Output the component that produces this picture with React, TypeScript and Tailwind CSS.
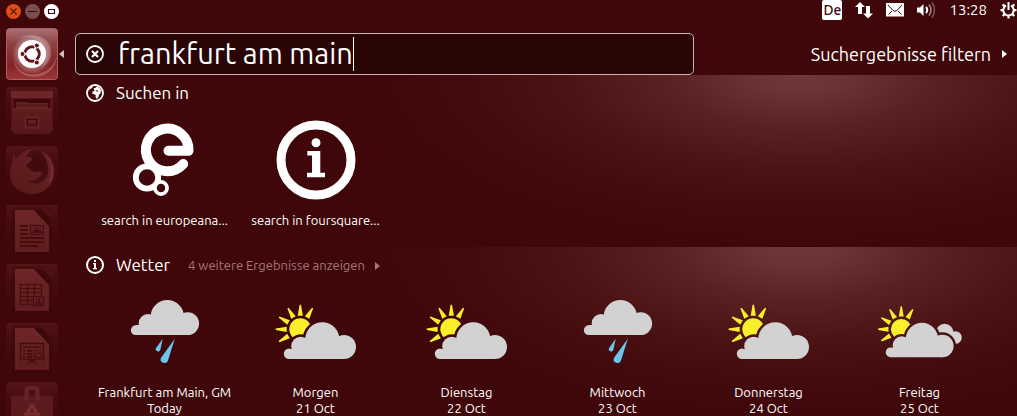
import { useState } from "react";
import type { ReactNode } from "react";

type Weather = "rain" | "sun" | "sunClouds";

const forecast: { day: string; date: string; weather: Weather }[] = [
  { day: "Frankfurt am Main, GM", date: "Today", weather: "rain" },
  { day: "Morgen", date: "21 Oct", weather: "sun" },
  { day: "Dienstag", date: "22 Oct", weather: "sun" },
  { day: "Mittwoch", date: "23 Oct", weather: "rain" },
  { day: "Donnerstag", date: "24 Oct", weather: "sun" },
  { day: "Freitag", date: "25 Oct", weather: "sunClouds" },
];

/* ---------- SMALL ICONS ---------- */

function InfoIcon({ className }: { className: string }) {
  return (
    <svg viewBox="8 8 80 80" className={className} aria-hidden="true">
      <circle cx="48" cy="48" r="35" fill="none" stroke="#fff" strokeWidth="9" />
      <circle cx="48" cy="30.7" r="4.5" fill="#fff" />
      <path d="M39.3 39h13v21.7H57v4.6H39v-4.6h5V43.4h-4.7z" fill="#fff" />
    </svg>
  );
}

function SmallInfoIcon() {
  return (
    <svg viewBox="0 0 18 18" className="size-[18px]" aria-hidden="true">
      <circle cx="9" cy="9" r="8" fill="none" stroke="#fff" strokeWidth="2" />
      <path d="M8 4h2v2H8zM7 7h3v5h1v1.2H7V12h1V8.2H7z" fill="#fff" />
    </svg>
  );
}

function GlobeIcon() {
  return (
    <svg viewBox="0 0 18 18" className="size-[18px]" aria-hidden="true">
      <circle cx="9" cy="9" r="8" fill="none" stroke="#fff" strokeWidth="1.8" />
      <path d="M7.5 4.5l2-.8L11 2.500l2.600 1.500L15.500 7l-1.300 1 .8.8-2 2-.6 2.400-1.700 1.800-1.100-1.700.1-2.400-1.900-.6L6 9.200l.7-1.800 1.900-.9z" fill="#fff" />
      <path d="M9.300 6.500l1.700-.3 1.500.9-1.200.6z" fill="#3f0709" />
      <path d="M2.300 6.500L4.500 3 7 2.200 6.300 3.800 4.300 5z" fill="#fff" />
    </svg>
  );
}

function ClearIcon() {
  return (
    <svg viewBox="0 0 18 18" className="size-[18px]" aria-hidden="true">
      <circle cx="9" cy="9" r="8" fill="none" stroke="#fff" strokeWidth="1.8" />
      <path d="M6 6l6 6M12 6l-6 6" stroke="#fff" strokeWidth="2.2" />
    </svg>
  );
}

function Triangle({ className }: { className: string }) {
  return (
    <svg viewBox="0 0 5 8" className={className} aria-hidden="true">
      <path d="M0 0l5 4-5 4z" fill="currentColor" />
    </svg>
  );
}

/* ---------- TOP BAR ---------- */

function TopBar() {
  return (
    <header className="flex h-[22px] items-start justify-between">
      <div className="flex gap-1 pt-1 pl-[6px]">
        <button type="button" aria-label="Schließen" className="size-[15px]">
          <svg viewBox="0 0 15 15" className="size-[15px]">
            <circle cx="7.5" cy="7.5" r="7.5" fill="#e04c16" />
            <path d="M4.5 4.5l6 6M10.5 4.5l-6 6" stroke="#5a1a0a" strokeWidth="1.2" />
          </svg>
        </button>
        <button type="button" aria-label="Minimieren" className="size-[15px]">
          <svg viewBox="0 0 15 15" className="size-[15px]">
            <circle cx="7.5" cy="7.5" r="7.5" fill="#7a4e50" />
            <path d="M3 7.5h9" stroke="#3f0709" />
          </svg>
        </button>
        <button type="button" aria-label="Maximieren" className="size-[15px]">
          <svg viewBox="0 0 15 15" className="size-[15px]">
            <circle cx="7.5" cy="7.5" r="7.5" fill="#fff" />
            <path d="M4.500 5.500h6v4h-6z" fill="none" stroke="#3f0709" strokeWidth="1.2" />
          </svg>
        </button>
      </div>

      <div className="flex h-5 items-center gap-[13px] text-[15px]">
        <button type="button" className="h-5 w-5 rounded-xs bg-white text-center text-sm leading-5 font-medium text-[#3f0709]">De</button>
        <button type="button" aria-label="Netzwerk">
          <svg viewBox="0 0 18 18" className="size-[18px]">
            <path d="M5 1l5 5H7v7H3V6H0z" fill="#fff" />
            <path d="M13 17.500l5-5h-3V5h-4v7.500H8z" fill="#fff" />
          </svg>
        </button>
        <button type="button" aria-label="Nachrichten">
          <svg viewBox="0 0 18 14" className="h-[14px] w-[18px]">
            <rect width="18" height="13.5" rx=".5" fill="#fff" />
            <path d="M2 2l5 5.500q2 1.500 4 0L16 2M2.500 11.500L6 8M15.500 11.500L12 8" fill="none" stroke="#3f0709" />
          </svg>
        </button>
        <button type="button" aria-label="Lautstärke">
          <svg viewBox="0 0 19 18" className="h-[18px] w-[19px]">
            <path d="M0 6.500h3L6.500 3v12L3 11.500H0z" fill="#fff" />
            <path d="M9 6q2.500 3 0 6" fill="none" stroke="#fff" strokeWidth="2" />
            <path d="M12 3.500q4 5.500 0 11" fill="none" stroke="#a58586" strokeWidth="1.6" />
            <path d="M15 1.500q5 7.500 0 15" fill="none" stroke="#7c5152" strokeWidth="1.6" />
          </svg>
        </button>
        <time className="text-white">13:28</time>
        <button type="button" aria-label="System">
          <svg viewBox="0 0 17 18" className="h-[18px] w-[17px]">
            <path d="M6 4.700a5.200 5.200 0 1 0 5 0" fill="none" stroke="#fff" strokeWidth="2" />
            <path d="M8.500 1v8" stroke="#fff" strokeWidth="2" />
            <path d="M.5 9.200h3M13.500 9.200h3M8.500 14.500v3M2.700 3.400l2 2M14.300 3.400l-2 2M2.700 15l2-2M14.300 15l-2-2" stroke="#fff" strokeWidth="2.2" />
          </svg>
        </button>
      </div>
    </header>
  );
}

/* ---------- LAUNCHER ---------- */

function UbuntuArt() {
  return (
    <svg viewBox="0 0 52 52" className="size-[52px]">
      <defs>
        <linearGradient id="dashTile" x1="0" y1="0" x2="0" y2="1">
          <stop offset="0" stopColor="#a87373" />
          <stop offset=".3" stopColor="#8c4143" />
          <stop offset=".7" stopColor="#822427" />
          <stop offset="1" stopColor="#9c3538" />
        </linearGradient>
        <radialGradient id="dashGlow">
          <stop offset=".6" stopColor="#fff" stopOpacity=".4" />
          <stop offset="1" stopColor="#fff" stopOpacity="0" />
        </radialGradient>
      </defs>
      <rect x=".5" y=".5" width="51" height="51" rx="3" fill="url(#dashTile)" stroke="#b25a5c" />
      <path d="M1 17C17 3 38 5 44 17c3 10-1 19-9 23 8-10 6-23-5-29C21 7 10 9 1 17z" fill="#fff" opacity=".2" />
      <path d="M8 29C9 45 25 51 40 43c6-4 9-9 11-15-1 11-8 18-17 20C19 51 7 43 8 29z" fill="#fff" opacity=".22" />
      <circle cx="26" cy="26" r="20" fill="url(#dashGlow)" />
      <circle cx="26" cy="26" r="14" fill="#fff" />
      <circle cx="26" cy="26" r="7.2" fill="none" stroke="#641416" strokeWidth="3" />
      <path d="M26 26L16 26M26 26l5-9M26 26l5 9" stroke="#fff" strokeWidth="1.6" />
      <circle cx="26" cy="26" r="5.600" fill="#fff" />
      <g fill="#641416" stroke="#fff" strokeWidth="1">
        <circle cx="16.500" cy="26" r="2.500" />
        <circle cx="30.800" cy="17.500" r="2.500" />
        <circle cx="30.800" cy="34.500" r="2.500" />
      </g>
    </svg>
  );
}

function FilesArt() {
  return (
    <svg viewBox="0 0 52 52" className="size-[52px]">
      <defs>
        <linearGradient id="drawer" x1="0" y1="0" x2="0" y2="1">
          <stop offset="0" stopColor="#611d20" />
          <stop offset="1" stopColor="#54161a" />
        </linearGradient>
      </defs>
      <path d="M5 5q0-1 1-1h40q1 0 1 1v39H5z" fill="#571719" />
      <rect x="5" y="4" width="42" height="7" rx="1" fill="#6d2528" />
      <path d="M8 12h36v9H8z" fill="#3c080a" />
      <path d="M10 15h12l1 1h19v6H10z" fill="#632023" />
      <path d="M10 18h32" stroke="#4a1012" />
      <path d="M7 21h38v26H7z" fill="url(#drawer)" />
      <path d="M7 21.5h38" stroke="#6c2528" />
      <rect x="19" y="30" width="14" height="11" rx="2" fill="#64202300" stroke="#651f22" strokeWidth="2" />
      <rect x="21.5" y="32.5" width="9" height="5" fill="#642023" stroke="#3c080a" />
    </svg>
  );
}

function FirefoxArt() {
  return (
    <svg viewBox="0 0 52 52" className="size-[52px]">
      <defs>
        <radialGradient id="globe" cx=".55" cy=".35">
          <stop offset="0" stopColor="#3c080a" />
          <stop offset="1" stopColor="#4c1215" />
        </radialGradient>
        <linearGradient id="fox" x1="0" y1="1" x2="1" y2="0">
          <stop offset="0" stopColor="#561719" />
          <stop offset="1" stopColor="#6c2427" />
        </linearGradient>
      </defs>
      <circle cx="27" cy="25" r="21.500" fill="url(#globe)" />
      <path d="M7 8l3 5c5-7 13-10 19-10-6 2-8 5-9 8 3 0 6 0 6 2s-5 4-6 7c4 3 6 6 10 6 3-1 6-1 6 2-3 5-9 8-15 6 6 6 16 4 20-3 3-7 1-17-6-26 10 4 14 13 13 23-1 12-10 20-22 20C13 48 4 39 4 28c0-7 3-11 3-20z" fill="url(#fox)" />
      <path d="M40 9c7 9 7 20 2 29l3-3c4-9 2-19-5-26z" fill="#7c2e31" />
    </svg>
  );
}

function Sheet({ id, children }: { id: string; children: ReactNode }) {
  return (
    <svg viewBox="0 0 52 52" className="size-[52px]">
      <defs>
        <linearGradient id={id} x1="0" y1="0" x2="0" y2="1">
          <stop offset="0" stopColor="#6f2629" />
          <stop offset="1" stopColor="#5c1b1e" />
        </linearGradient>
      </defs>
      <path d="M6 2h40v48H6z" fill="#350608" opacity=".3" />
      <path d="M9 5h19l15 16v26H9z" fill={`url(#${id})`} />
      <path d="M11 21v24h30V22" fill="none" stroke="#702729" opacity=".6" />
      <path d="M28 5l15 16V9q0-4-4-4z" fill="#3c080a" />
      <path d="M34 3h9q3 0 3 3v9z" fill="#4c1114" />
      {children}
    </svg>
  );
}

function WriterArt() {
  return (
    <Sheet id="writer">
      <path d="M14 21h8M14 25h8M14 29h8M14 33h24M14 37h24M14 41h18" stroke="#460c0e" strokeWidth="2" />
      <rect x="24.5" y="20.5" width="13" height="9" fill="#5e1d20" stroke="#460c0e" />
      <path d="M26 28l4-5 3 3 1-1 3 3z" fill="#460c0e" />
    </Sheet>
  );
}

function CalcArt() {
  return (
    <Sheet id="calc">
      <path d="M14.500 20.500h21v20h-21zM14 24.500h22M14 28.500h22M14 32.500h22M14 36.500h22M21.500 20v21M28.500 20v21" fill="none" stroke="#460c0e" strokeWidth="1.2" />
      <path d="M27.500 32.500h10v9h-10z" fill="#5e1d20" stroke="#460c0e" />
      <path d="M30.500 41v-4M33 41v-7M35.500 41v-3" stroke="#460c0e" strokeWidth="1.5" />
    </Sheet>
  );
}

function ImpressArt() {
  return (
    <Sheet id="impress">
      <path d="M14.500 20.500h23v16h-23zM17 24h18M26 37v3M21 41l5-4 5 4" fill="none" stroke="#460c0e" strokeWidth="1.5" />
      <path d="M17 28h2M17 31h2M17 34h2M21 28h5M21 31h5M21 34h5" stroke="#460c0e" strokeWidth="2" />
      <path d="M28 27.500h7v7h-7zM29 33l2-3 1 1 2-2" fill="none" stroke="#460c0e" />
    </Sheet>
  );
}

function SoftwareArt() {
  return (
    <svg viewBox="0 0 52 52" className="size-[52px]">
      <path d="M5 11h42v41H5z" fill="#5b1a1d" />
      <path d="M5 11h42v3H5z" fill="#4b1013" />
      <path d="M20.500 18V9q0-3 3-3h5q3 0 3 3v9" fill="none" stroke="#662225" strokeWidth="4" />
      <path d="M17 37l7-15h4l7 15h-4l-5-11-5 11z" fill="#7a2b2e" />
      <path d="M18 32h16" stroke="#7a2b2e" strokeWidth="3" />
    </svg>
  );
}

const apps = [
  { name: "Dateien", art: <FilesArt /> },
  { name: "Firefox", art: <FirefoxArt /> },
  { name: "Writer", art: <WriterArt /> },
  { name: "Calc", art: <CalcArt /> },
  { name: "Impress", art: <ImpressArt /> },
  { name: "Software-Center", art: <SoftwareArt /> },
];

function Launcher() {
  return (
    <nav className="flex w-16 shrink-0 flex-col gap-[7px] pt-[6px] pl-[6px]">
      <div className="flex items-center gap-px">
        <button type="button" aria-label="Dash" className="size-[52px] shrink-0">
          <UbuntuArt />
        </button>
        <Triangle className="h-2 w-[5px] rotate-180 text-[#d0c0c0]" />
      </div>
      {apps.map((app) => (
        <button key={app.name} type="button" aria-label={app.name} className="size-[52px] shrink-0 overflow-hidden rounded bg-linear-to-b from-[#541416] via-[#450b0d] via-30% to-[#3f0709]">
          {app.art}
        </button>
      ))}
    </nav>
  );
}

/* ---------- WEATHER DRAWINGS ---------- */

function Cloud() {
  return (
    <>
      <circle cx="54.3" cy="55.4" r="17.1" />
      <circle cx="76" cy="63" r="12" />
      <circle cx="32.8" cy="62.3" r="9.6" />
      <circle cx="21" cy="69.8" r="5.2" />
      <path d="M21 65h55v10H21z" />
    </>
  );
}

function RainArt() {
  return (
    <svg viewBox="0 0 96 96" className="size-24">
      <g fill="#d2d2d2">
        <circle cx="50.3" cy="32.7" r="16.7" />
        <circle cx="70.7" cy="39.6" r="11.4" />
        <circle cx="31" cy="39.3" r="9.3" />
        <circle cx="18.8" cy="46.2" r="4.9" />
        <path d="M18.800 41h52v10.100h-52z" />
      </g>
      <path d="M45.700 54.800l-2.300 11a2.300 2.300 0 1 1-4.500-1.600zM57.800 54.800L51 76.500a3.700 3.700 0 1 1-7.100-2.600z" fill="#6cc5ec" />
    </svg>
  );
}

function SunArt({ id, extra }: { id: string; extra?: boolean }) {
  return (
    <svg viewBox="0 0 96 96" className="size-24">
      <mask id={id} maskUnits="userSpaceOnUse" x="0" y="0" width="110" height="110">
        <path d="M0 0h110v110H0z" fill="#fff" />
        <g fill="#000" stroke="#000" strokeWidth="5">
          <Cloud />
        </g>
      </mask>
      <g transform={extra ? "translate(-1.1 2.7) scale(.94)" : undefined}>
        <g mask={`url(#${id})`}>
          {extra && (
            <g fill="#d2d2d2">
              <circle cx="78.5" cy="49" r="9.5" />
              <circle cx="90" cy="54" r="6.7" />
            </g>
          )}
          <g fill="#fbee2b">
            <circle cx="32.3" cy="45.3" r="11" />
            {[-120, -90, -60, -30, 0, 30].map((a) => (
              <path key={a} d="M29.700 31.700L31.600 20.700h1.400l1.900 11z" transform={`rotate(${a} 32.3 45.3)`} />
            ))}
          </g>
        </g>
        <g fill="#d2d2d2">
          <Cloud />
        </g>
      </g>
    </svg>
  );
}

function EuropeanaArt() {
  return (
    <svg viewBox="0 0 96 96" className="size-24">
      <g fill="none" stroke="#fff">
        <path d="M51.500 38.800h20A21.300 21.300 0 1 0 66.200 52" strokeWidth="10" strokeLinecap="round" strokeLinejoin="round" />
        <circle cx="30" cy="65.5" r="11.2" strokeWidth="5.8" fill="#3f0709" />
        <circle cx="44" cy="76" r="6.1" strokeWidth="3.7" fill="#3f0709" />
      </g>
    </svg>
  );
}

/* ---------- RESULTS ---------- */

function Section({ icon, title, more, children }: { icon: ReactNode; title: string; more?: string; children: ReactNode }) {
  return (
    <section className="bg-[radial-gradient(ellipse_430px_172px_at_77%_0%,#6f3738_0%,#6b3334_10%,#5a2123_31%,#4c1314_55%,#430b0d_78%,#3f0709_100%)] pb-[19px]">
      <div className="mb-px flex h-9 items-center pl-[11px]">
        {icon}
        <h2 className="ml-3 text-[17px] leading-6">{title}</h2>
        {more && (
          <a href="#wetter" className="ml-[18px] flex items-center gap-[10px] pt-0.5 text-[13px] text-[#a37879]">
            {more}
            <Triangle className="h-2 w-[5px]" />
          </a>
        )}
      </div>
      <div className="grid grid-cols-6 pr-[22px] pl-[14px]">{children}</div>
    </section>
  );
}

function Tile({ art, lines }: { art: ReactNode; lines: string[] }) {
  return (
    <button type="button" className="flex flex-col items-center text-[13px] leading-4 whitespace-nowrap">
      <span className="mb-1 flex size-24 items-center justify-center">{art}</span>
      {lines.map((line) => (
        <span key={line}>{line}</span>
      ))}
    </button>
  );
}

export default function App() {
  const [query, setQuery] = useState("frankfurt am main");

  return (
    <div className="flex h-screen flex-col overflow-hidden bg-[#3f0709] font-['Ubuntu','Noto_Sans',sans-serif] text-white">
      <TopBar />
      <div className="flex min-h-0 flex-1">
        <Launcher />
        <main className="ml-[11px] min-w-0 flex-1 pt-[11px]">
          {/* SEARCH ROW */}
          <div className="grid grid-cols-[619fr_323fr] items-center">
            <div className="flex h-[42px] items-center rounded-[5px] border border-[#c9b4b4] bg-[#290506] pl-[10px]">
              <button type="button" aria-label="Suche löschen" onClick={() => setQuery("")}>
                <ClearIcon />
              </button>
              <input
                type="text"
                aria-label="Suche"
                value={query}
                onChange={(e) => setQuery(e.target.value)}
                className="field-sizing-content ml-[14px] h-10 bg-transparent text-[29px] caret-transparent outline-none"
              />
              <span className="h-[34px] w-px bg-white" />
            </div>
            <button type="button" className="flex items-center justify-end gap-[11px] pr-[10px] text-lg leading-6 whitespace-nowrap">
              Suchergebnisse filtern
              <Triangle className="h-2 w-[5px]" />
            </button>
          </div>

          {/* RESULTS */}
          <Section icon={<GlobeIcon />} title="Suchen in">
            <Tile art={<EuropeanaArt />} lines={["search in europeana..."]} />
            <Tile art={<InfoIcon className="size-20" />} lines={["search in foursquare..."]} />
          </Section>
          <Section icon={<SmallInfoIcon />} title="Wetter" more="4 weitere Ergebnisse anzeigen">
            {forecast.map((f) => (
              <Tile
                key={f.day}
                art={f.weather === "rain" ? <RainArt /> : <SunArt id={`gap-${f.day}`} extra={f.weather === "sunClouds"} />}
                lines={[f.day, f.date]}
              />
            ))}
          </Section>
        </main>
      </div>
    </div>
  );
}
